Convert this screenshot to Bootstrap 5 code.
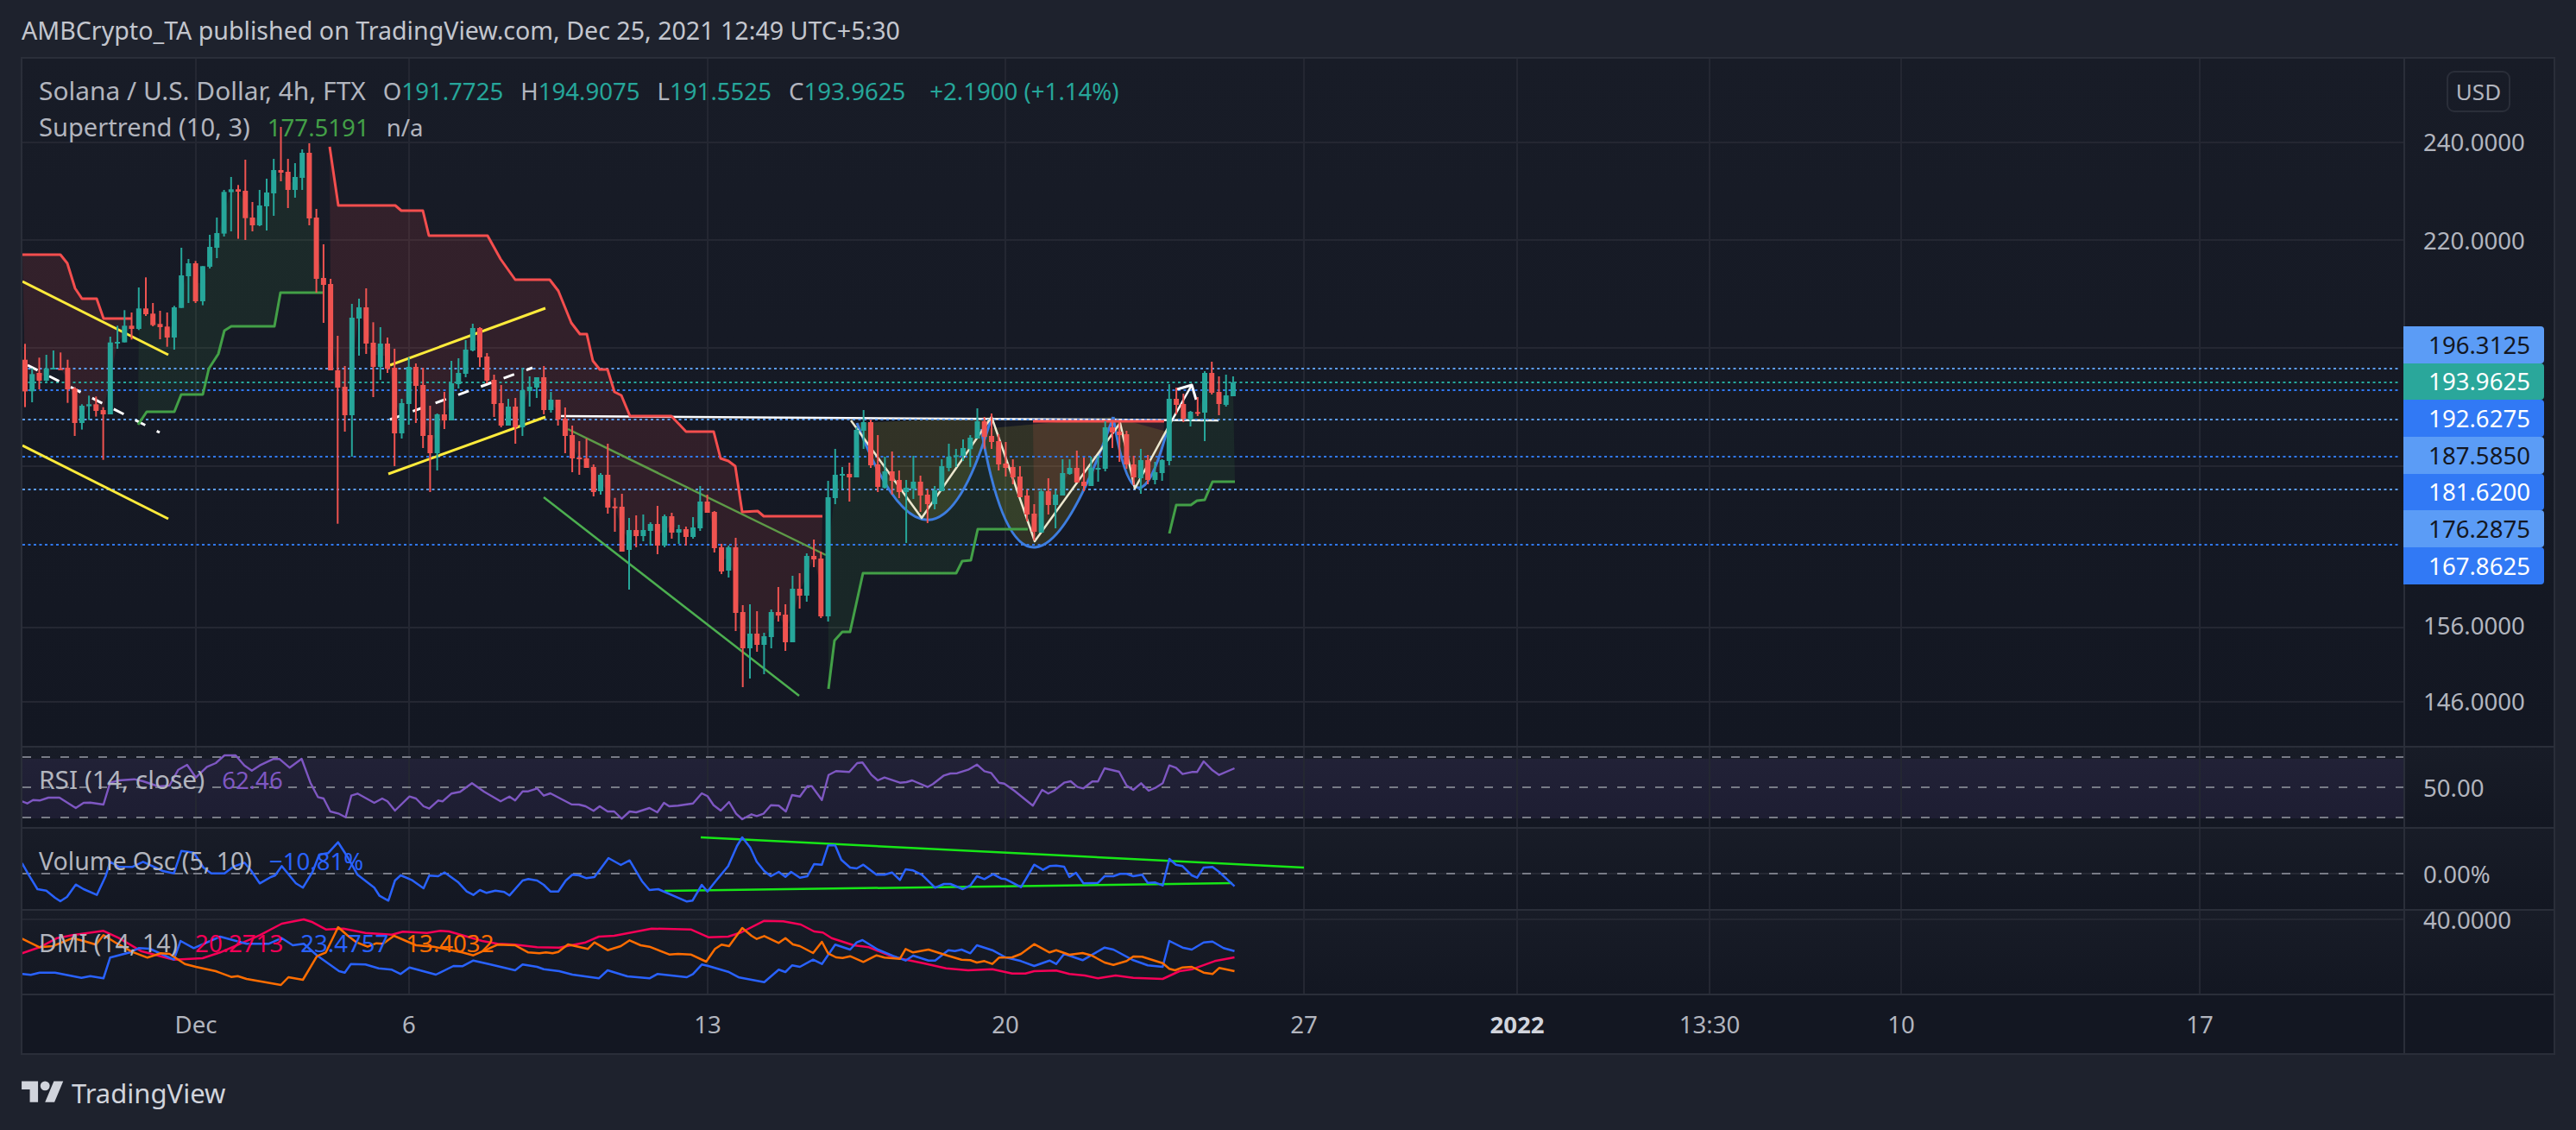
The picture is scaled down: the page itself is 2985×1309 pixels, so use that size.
<!DOCTYPE html>
<html lang="en">
<head>
    <meta charset="UTF-8" />
    <meta name="viewport" content="width=device-width, initial-scale=1" />
    <title>Solana / U.S. Dollar - TradingView</title>
    <link href="https://cdn.jsdelivr.net/npm/bootstrap@5.3.0/dist/css/bootstrap.min.css" rel="stylesheet" />
    <style>
        body {
            background: #1e222d;
            font-family: "Noto Sans", "Liberation Sans", sans-serif;
            font-size: 27.6px;
            color: #b2b5be;
            height: 1309px;
            overflow: hidden;
        }
        .tv-head { height: 66px; padding-left: 25px; font-size: 28.6px; color: #c3c6ce; line-height: 1; padding-top: 4px; }
        .tv-frame { width: 2937px; margin-left: 24px; border: 2px solid #2a2e39; }
        .tv-pane { background: linear-gradient(#181c27, #131722); border-bottom: 2px solid #2a2e39; }
        .tv-time { height: 67px; background: #131722; }
        .tv-plot { width: 2759px; }
        .tv-axis { width: 174px; border-left: 2px solid #2a2e39; }
        .pane-main { height: 798px; }
        .pane-rsi { height: 94px; }
        .pane-vol { height: 95px; }
        .pane-dmi { height: 98px; }
        .tv-legend { top: 16px; left: 19px; line-height: 42px; }
        .tv-row { height: 42px; }
        .tv-label { font-size: 29.9px; }
        .tv-label-mid { font-size: 29.1px; }
        .tv-label-narrow { font-size: 28.5px; }
        .val-teal { color: #26a69a; }
        .val-green { color: #43a047; }
        .val-purple { color: #7e57c2; }
        .val-blue { color: #2962ff; }
        .val-pink { color: #f50057; }
        .val-orange { color: #ff6d00; }
        .tv-gap { margin-left: 20px; }
        .tv-gap-wide { margin-left: 28px; }
        .tv-tick { left: 21px; transform: translateY(-50%); line-height: 1; }
        .tv-date { top: 34px; transform: translate(-50%, -50%); line-height: 1; }
        .tv-date-strong { font-weight: 700; color: #d1d4dc; }
        .tv-usd { top: 14px; left: 48px; width: 74px; height: 48px; border: 2px solid #2a2e39; border-radius: 9px; font-size: 26px; line-height: 1; }
        .tv-tags { top: 310px; left: -2px; width: 163px; }
        .tv-tag { height: 42.7px; padding-right: 16px; border-radius: 0 4px 4px 0; line-height: 1; }
        .tag-light { background: #5b9cf6; color: #131722; }
        .tag-dark { background: #3179f5; color: #fff; }
        .tag-teal { background: #2aa79b; color: #fff; }
        .tv-foot { margin-left: 25px; margin-top: 25px; gap: 9px; color: #d1d4dc; font-size: 31px; line-height: 1; }
    </style>
</head>
<body>

    <div class="tv-head d-flex align-items-center text-nowrap">AMBCrypto_TA published on TradingView.com, Dec 25, 2021 12:49 UTC+5:30</div>

    <div class="tv-frame">
        <div class="tv-pane pane-main d-flex">
            <div class="tv-plot position-relative">
                <svg id="svgMain" class="d-block" width="2759" height="796" viewBox="26 68 2759 796"></svg>
                <div class="tv-legend position-absolute text-nowrap">
                    <div class="tv-row d-flex">
                        <span class="tv-label">Solana / U.S. Dollar, 4h, FTX</span>
                        <span class="tv-gap">O<span class="val-teal">191.7725</span></span>
                        <span class="tv-gap">H<span class="val-teal">194.9075</span></span>
                        <span class="tv-gap">L<span class="val-teal">191.5525</span></span>
                        <span class="tv-gap">C<span class="val-teal">193.9625</span></span>
                        <span class="tv-gap-wide val-teal">+2.1900 (+1.14%)</span>
                    </div>
                    <div class="tv-row d-flex">
                        <span class="tv-label-mid">Supertrend (10, 3)</span>
                        <span class="tv-gap val-green">177.5191</span>
                        <span class="tv-gap">n/a</span>
                    </div>
                </div>
            </div>
            <div class="tv-axis position-relative" id="axisMain">
                <div class="tv-usd position-absolute d-flex align-items-center justify-content-center">USD</div>
                <div class="tv-tags position-absolute d-flex flex-column">
                    <div class="tv-tag tag-light d-flex align-items-center justify-content-end">196.3125</div>
                    <div class="tv-tag tag-teal d-flex align-items-center justify-content-end">193.9625</div>
                    <div class="tv-tag tag-dark d-flex align-items-center justify-content-end">192.6275</div>
                    <div class="tv-tag tag-light d-flex align-items-center justify-content-end">187.5850</div>
                    <div class="tv-tag tag-dark d-flex align-items-center justify-content-end">181.6200</div>
                    <div class="tv-tag tag-light d-flex align-items-center justify-content-end">176.2875</div>
                    <div class="tv-tag tag-dark d-flex align-items-center justify-content-end">167.8625</div>
                </div>
            </div>
        </div>

        <div class="tv-pane pane-rsi d-flex">
            <div class="tv-plot position-relative">
                <svg id="svgRsi" class="d-block" width="2759" height="92" viewBox="26 866 2759 92"></svg>
                <div class="tv-legend position-absolute text-nowrap d-flex">
                    <span class="tv-label">RSI (14, close)</span>
                    <span class="tv-gap val-purple">62.46</span>
                </div>
            </div>
            <div class="tv-axis position-relative" id="axisRsi"></div>
        </div>

        <div class="tv-pane pane-vol d-flex">
            <div class="tv-plot position-relative">
                <svg id="svgVol" class="d-block" width="2759" height="93" viewBox="26 960 2759 93"></svg>
                <div class="tv-legend position-absolute text-nowrap d-flex">
                    <span class="tv-label-narrow">Volume Osc (5, 10)</span>
                    <span class="tv-gap val-blue">−10.81%</span>
                </div>
            </div>
            <div class="tv-axis position-relative" id="axisVol"></div>
        </div>

        <div class="tv-pane pane-dmi d-flex">
            <div class="tv-plot position-relative">
                <svg id="svgDmi" class="d-block" width="2759" height="96" viewBox="26 1055 2759 96"></svg>
                <div class="tv-legend position-absolute text-nowrap d-flex">
                    <span class="tv-label-narrow">DMI (14, 14)</span>
                    <span class="tv-gap val-pink">20.2713</span>
                    <span class="tv-gap val-blue">23.4757</span>
                    <span class="tv-gap val-orange">13.4032</span>
                </div>
            </div>
            <div class="tv-axis position-relative" id="axisDmi"></div>
        </div>

        <div class="tv-time d-flex">
            <div class="tv-plot position-relative" id="timeAxis"></div>
            <div class="tv-axis"></div>
        </div>
    </div>

    <div class="tv-foot d-flex align-items-center">
        <svg width="49" height="38" viewBox="0 0 36 28" fill="#d1d4dc"><path d="M14 22H7V11H0V4h14v18zM28 22h-8l7.5-18h8L28 22z"/><circle cx="20" cy="8" r="4"/></svg>
        <span>TradingView</span>
    </div>

    <script src="https://cdn.jsdelivr.net/npm/bootstrap@5.3.0/dist/js/bootstrap.bundle.min.js"></script>

    <script>
        // candles: type, high, body top, body bottom, low, read off the screenshot per block
        const candleBlocks = [
            [150, `d745,800,910,965 u830,850,910,948 d793,846,873,903 u783,830,873,875 u768,828,833,833 d775,830,835,835 d800,828,903,950 d895,900,1020,1065 u955,960,1020,1043 u925,955,962,1010 d928,955,978,998 d965,975,990,1148 u720,740,990,990 u682,738,744,762 u628,682,740,740 d636,682,693,730 u549,622,693,697 d514,622,642,648 d603,640,680,684 d630,676,687,729 d636,685,723,755 u613,618,723,765 u411,507,620,620 u450,465,510,603 d457,465,597,603 u475,475,597,611 u366,408,477,483 u306,360,411,447 u210,217,362,372 u165,208,218,354 d193,208,216,380 d105,213,308,384 d252,306,333,354 u210,264,333,336 u171,219,267,351 u102,141,222,300 d-9,141,150,180 d102,147,210,273 u117,165,210,237 u69,81,168,210 d48,81,309,333 d276,306,519,567 d399,516,540,672 d519,537,837,837 d717,837,897,1370 d822,894,993,1050 u606,654,993,1137 u588,618,657,786`],
            [300, `d102,168,294,330 d220,291,375,480 u237,294,375,420 d273,294,382,396 d312,378,606,720 u486,501,606,624 u342,375,504,576 d363,375,441,570 d378,438,615,657 d510,612,675,810 u537,540,675,735 d462,540,561,591 u354,432,561,561 u345,396,435,450 u282,315,399,411 u225,240,318,321 d237,240,342,375 d327,339,423,432 d402,420,504,549 d438,501,579,585 u486,513,579,579 d483,513,585,642 u378,456,585,615 u408,444,459,513 u411,411,447,483 d372,411,525,540 u462,489,525,534 d489,489,558,579 d516,555,615,675 d579,612,693,741 d633,690,695,750 d624,693,726,726 d714,723,810,825 u744,750,807,819 d642,750,864,885`],
            [460, `d350,380,384,468 d336,381,537,537 u420,462,531,669 d411,462,483,522 u408,462,483,501 u435,441,465,516 d378,441,516,546 u408,414,516,522 d402,414,471,492 u444,459,471,510 d450,459,486,516 u417,453,486,492 u309,363,456,465 d339,363,402,402 d396,399,525,540 d510,522,606,615 u516,522,603,627 d489,522,750,813 d723,747,873,1008 u720,822,873,978 d744,822,861,885 u819,831,861,963 u738,747,834,873 d660,747,759,780 d720,756,852,882 u621,666,852,852 d612,666,690,735 u543,552,690,711 d495,552,564,591 d537,561,762,768 u291,348,762,780 u180,270,351,372 u243,267,273,318`],
            [420, `d348,387,399,483 u225,234,399,399 u165,207,237,300 d198,207,357,366 d252,354,432,450 u327,378,435,438 d309,378,411,459 d375,408,450,471 u408,435,450,627 u324,414,438,474 d393,414,462,519 d441,459,492,558 u429,444,492,510 u336,360,447,447 u282,327,366,378 u300,322,328,363 u267,297,324,342 u252,261,301,363 u159,204,264,264 d189,204,258,300 d177,255,276,300 d249,273,354,375 d276,351,366,396 d336,363,399,423 d360,396,468,468 d441,462,528,552 d492,525,588,618 u438,447,591,591 d402,447,495,528 u444,459,495,576 u336,384,462,462 u336,366,387,390 d306,366,417,417 d330,414,429,447 u327,366,429,429 u324,366,369,414 u204,225,369,378 d198,225,243,297 d207,240,252,345 d237,249,354,369 d324,354,399,426 u300,339,402,456 d321,339,408,423 u345,381,408,423 u336,339,384,411 u75,126,342,357 d87,126,147,180 d108,144,195,207 u168,171,198,222 d120,172,174,186 u30,36,174,273 d-3,36,105,111 d48,102,144,183 u42,114,147,153 u48,69,117,117`]
        ];
        const candles = [];
        candleBlocks.forEach(([base, txt]) => {
            txt.trim().split(/\s+/).forEach(c => {
                const v = c.slice(1).split(',').map(n => base + Number(n) / 3);
                const i = candles.length;
                candles.push({ up: c[0] === 'u', x: 29 + 8.235 * i, hi: v[0], top: v[1], bot: v[2], lo: v[3] });
            });
        });

        const TEAL = '#26a69a', RED = '#ef5350', ST_RED = '#f44e4e', ST_GREEN = '#43a047';
        const vGrid = [227, 474, 820, 1165, 1511, 1758, 1981, 2203, 2549];
        const GRID = '#242732';

        const ptsAttr = pts => pts.map(p => p[0].toFixed(1) + ',' + p[1].toFixed(1)).join(' ');
        const poly = (pts, color, w, extra = '') =>
            `<polyline points="${ptsAttr(pts)}" fill="none" stroke="${color}" stroke-width="${w}" stroke-linejoin="round" ${extra}/>`;
        const hLine = (y, color, w, extra = '') =>
            `<line x1="26" x2="2785" y1="${y}" y2="${y}" stroke="${color}" stroke-width="${w}" ${extra}/>`;
        const vLines = (top, bot) => vGrid.map(x =>
            `<line x1="${x}" x2="${x}" y1="${top}" y2="${bot}" stroke="${GRID}" stroke-width="2"/>`).join('');

        // supertrend, segment by segment
        const trend = [
            { color: ST_RED, fill: 'rgba(255,82,82,.12)', from: 0, to: 15, w: 3,
              pts: [[26,295],[70,295],[78,305],[87,334],[95,346],[112,346],[120,369],[153,369]] },
            { color: ST_RED, fill: 'rgba(255,82,82,.12)', from: 43, to: 112, w: 3,
              pts: [[382,170],[392,238],[458,238],[465,244],[490,244],[497,273],[565,273],[580,300],[597,324],[637,324],[647,337],[662,374],[672,387],[680,387],[687,418],[695,428],[704,428],[712,454],[720,458],[730,482],[778,482],[795,500],[827,500],[835,531],[844,534],[852,540],[860,593],[878,592],[885,598],[953,598]] },
            { color: ST_RED, fill: 'rgba(255,82,82,.12)', from: 142, to: 160, w: 3,
              pts: [[1197,488],[1349,488]] },
            { color: ST_GREEN, fill: 'rgba(76,175,80,.1)', from: 16, to: 42, w: 3,
              pts: [[160,492],[170,477],[202,477],[210,457],[235,457],[242,427],[253,410],[260,383],[268,378],[318,378],[325,339],[375,339]] },
            { color: ST_GREEN, fill: 'rgba(76,175,80,.1)', from: 113, to: 141, w: 3,
              pts: [[960,798],[967,742],[976,732],[985,732],[1000,664],[1108,664],[1115,650],[1125,649],[1133,613],[1191,613]] },
            { color: ST_GREEN, fill: 'rgba(76,175,80,.1)', from: 161, to: 170, w: 3,
              pts: [[1355,618],[1363,585],[1380,585],[1387,580],[1396,579],[1405,558],[1431,558]] }
        ];

        const cups = ['M993 490Q1081 718 1149 483', 'M1137 497Q1186 778 1290 483', 'M1290 483Q1315 638 1352 500'];
        const dots = [[427,'#5b9cf6'],[443,'#26a69a'],[452,'#3179f5'],[486,'#5b9cf6'],[529,'#3179f5'],[567,'#5b9cf6'],[631,'#3179f5']];

        let main = '';
        [165, 278, 403, 540, 727, 813].forEach(y => main += hLine(y, GRID, 2));
        main += vLines(68, 864);

        trend.forEach(t => {
            const back = [];
            for (let i = t.to; i >= t.from; i--) {
                back.push([candles[i].x, (candles[i].top + candles[i].bot) / 2]);
            }
            main += `<polygon points="${ptsAttr(t.pts.concat(back))}" fill="${t.fill}"/>`;
        });
        cups.forEach(d => main += `<path d="${d}Z" fill="rgba(255,235,59,.12)"/>`);

        // drawings sit under the candles and the supertrend line
        const YELLOW = '#ffeb3b', CHANNEL = '#4caf50', CREAM = '#ece8cf';
        main += poly([[650,482],[1412,487]], '#fff', 2.5);
        dots.forEach(([y, c]) => main += `<line x1="26" x2="2782" y1="${y}" y2="${y}" stroke="${c}" stroke-width="2" stroke-dasharray="3 3.5"/>`);
        main += poly([[26,326],[195,411]], YELLOW, 3) + poly([[26,516],[195,601]], YELLOW, 3);
        main += poly([[452,423],[632,357]], YELLOW, 3) + poly([[450,549],[632,483]], YELLOW, 3);
        main += poly([[32,423],[185,501]], '#fff', 3, 'stroke-dasharray="13 15"');
        main += poly([[452,486],[617,426]], '#fff', 3, 'stroke-dasharray="13 15"');
        main += poly([[658,497],[957,643]], '#5d9a47', 2.5) + poly([[630,576],[926,806]], CHANNEL, 2.5);
        cups.forEach(d => main += `<path d="${d}" fill="none" stroke="#3d7ddf" stroke-width="3"/>`);
        main += poly([[986,487],[1068,600],[1149,483],[1199,627],[1298,490],[1315,566],[1358,487]], CREAM, 2.5);
        main += poly([[1358,487],[1381,446]], '#fff', 2.5) + poly([[1364,451],[1381,446],[1386,463]], '#fff', 3);
        trend.forEach(t => main += poly(t.pts, t.color, t.w));

        candles.forEach(c => {
            const col = c.up ? TEAL : RED;
            const h = Math.max(c.bot - c.top, 2);
            main += `<rect x="${(c.x - 1).toFixed(1)}" y="${c.hi.toFixed(1)}" width="2" height="${(c.lo - c.hi).toFixed(1)}" fill="${col}"/>`;
            main += `<rect x="${(c.x - 3).toFixed(1)}" y="${c.top.toFixed(1)}" width="6" height="${h.toFixed(1)}" fill="${col}"/>`;
        });
        document.getElementById('svgMain').innerHTML = main;

        // indicator lines, read off two crops
        const crop = (x0, sx, s) => {
            const n = s.trim().split(/[\s,]+/).map(Number), out = [];
            for (let i = 0; i < n.length; i += 2) out.push([x0 + n[i] / sx, 860 + n[i + 1] / 3]);
            return out;
        };
        const series = (a, b) => crop(0, 1.96, a).filter(p => p[0] < 800).concat(crop(780, 1.96, b).filter(p => p[0] >= 800));

        const rsi = series(
            `50,205 62,212 75,200 90,202 110,192 135,192 172,228 190,210 205,209 235,216 250,140 270,132 305,128 325,135 360,153 385,150 405,95 425,78 445,122 470,85 490,72 510,45 535,45 555,80 572,98 590,80 620,58 635,58 658,88 685,57 705,140 722,190 735,195 750,240 770,248 785,260 798,185 812,178 850,210 868,195 880,205 897,237 930,188 945,195 962,222 975,230 995,202 1005,205 1025,178 1045,172 1072,142 1100,172 1137,205 1157,188 1170,202 1187,170 1200,170 1220,160 1235,185 1250,177 1298,215 1315,216 1330,222 1348,238 1362,222 1380,240 1395,240 1412,265 1430,240 1445,243 1475,228 1493,243 1508,210 1520,222 1540,220 1568,218`,
            `45,212 65,177 78,187 92,218 108,237 127,207 143,248 157,267 178,250 190,256 205,248 222,218 240,220 256,240 270,183 288,188 305,152 315,152 338,200 353,113 370,100 400,103 418,72 430,70 450,112 465,132 480,122 515,140 530,138 543,132 578,155 590,145 615,115 630,108 645,107 670,95 690,77 707,100 722,106 740,140 752,143 775,168 817,220 838,165 852,178 865,168 888,140 903,135 918,155 932,160 952,136 965,136 980,90 1013,102 1030,150 1045,165 1063,142 1080,168 1095,158 1112,142 1127,80 1142,88 1157,110 1178,103 1190,103 1205,66 1225,97 1240,113 1275,90`);
        const vol = series(
            `50,420 65,460 85,510 105,515 125,540 137,552 152,537 172,494 190,510 220,530 240,465 250,415 270,432 300,433 325,415 370,447 395,455 412,377 440,383 462,435 480,455 510,455 530,432 555,418 570,445 590,490 615,468 625,462 640,430 672,490 688,505 710,450 725,390 745,385 768,347 790,400 812,460 850,505 862,533 882,550 897,480 910,462 935,478 962,507 975,463 995,465 1010,452 1040,485 1060,518 1075,530 1090,513 1105,523 1125,515 1145,520 1157,532 1187,480 1200,475 1220,480 1235,495 1250,518 1268,518 1285,480 1300,460 1315,462 1332,472 1350,468 1382,402 1410,426 1430,410 1458,482 1475,513 1495,510 1560,553`,
            `44,550 65,495 78,518 95,485 125,430 145,360 157,330 175,365 190,415 207,447 222,465 240,450 255,467 268,450 288,470 305,465 320,423 338,425 352,358 368,358 382,408 402,435 417,438 432,425 462,460 480,460 497,452 515,478 528,441 545,445 565,460 595,505 615,492 630,492 658,510 675,497 690,465 707,475 727,458 745,473 755,475 790,503 805,465 820,425 840,443 855,430 870,428 888,432 900,468 915,453 932,490 965,488 980,465 1000,465 1015,457 1030,457 1045,465 1065,460 1078,488 1095,487 1112,497 1127,405 1142,425 1157,430 1178,462 1190,470 1205,435 1225,433 1240,450 1275,500`);
        const dmiPlus = series(
            `50,733 90,712 130,680 165,670 235,655 270,680 320,725 395,755 460,750 500,730 590,670 640,630 690,615 710,625 740,650 780,647 830,662 890,668 915,658 970,662 1000,655 1020,657 1095,690 1130,700 1170,703 1220,712 1270,713 1330,695 1360,675 1395,672 1480,647 1568,649`,
            `40,650 80,677 125,675 155,660 207,620 250,622 290,633 320,657 340,661 360,680 410,705 445,712 490,740 520,752 570,768 620,785 670,792 725,788 770,803 800,803 820,795 870,793 900,805 935,810 965,820 1005,810 1045,818 1112,822 1150,795 1180,788 1230,760 1275,747`);
        const dmiMinus = series(
            `50,805 70,808 90,800 125,800 185,818 205,812 235,820 250,748 295,730 315,715 340,717 395,755 410,690 440,715 500,675 560,700 610,700 640,680 665,705 690,700 720,740 770,795 783,800 797,770 830,772 860,785 890,790 910,805 930,782 990,807 1030,777 1050,778 1075,758 1110,770 1170,792 1187,772 1220,780 1235,788 1270,795 1300,807 1360,820 1380,792 1425,813 1475,820 1493,805 1560,816`,
            `45,805 65,772 80,777 125,797 150,817 207,833 240,790 255,798 270,775 288,780 318,755 338,770 368,703 402,720 417,695 430,687 465,720 500,742 528,758 545,741 580,758 595,758 625,722 640,725 655,720 675,733 690,705 725,722 755,747 790,760 820,777 855,758 870,770 888,735 930,757 980,713 1000,720 1045,757 1078,775 1112,780 1127,690 1157,713 1178,720 1205,695 1225,692 1250,715 1275,725`);
        const dmiAdx = series(
            `50,682 90,712 120,708 165,680 190,690 218,703 235,670 265,698 300,728 335,748 365,733 385,735 420,770 445,780 490,795 525,815 540,812 560,822 638,843 655,816 688,825 720,743 740,730 768,642 790,672 810,695 835,710 855,698 870,700 895,672 945,705 985,710 1050,730 1075,740 1130,703 1170,705 1200,730 1225,733 1240,730 1255,733 1268,728 1290,702 1335,718 1350,695 1380,722 1410,708 1430,688 1455,705 1475,710 1520,737 1540,735 1568,742`,
            `40,737 75,762 95,718 110,703 127,708 157,645 178,672 190,683 207,673 240,697 255,680 272,702 288,708 318,732 338,693 352,733 370,747 385,749 402,743 432,763 462,740 480,748 515,752 528,718 545,730 580,720 625,742 655,755 675,757 690,765 707,760 725,770 740,748 770,747 790,735 820,701 855,730 870,722 900,738 930,732 950,740 980,765 1000,773 1030,760 1045,744 1065,745 1112,767 1127,787 1140,792 1157,782 1178,780 1205,800 1225,805 1240,784 1275,795`);

        const DASH = 'stroke-dasharray="10 12"';
        document.getElementById('svgRsi').innerHTML =
            `<rect x="26" y="879" width="2759" height="69" fill="rgba(126,87,194,.1)"/>` + vLines(866, 958) +
            hLine(877, '#787b86', 2, DASH) + hLine(912, '#787b86', 2, DASH) + hLine(947, '#787b86', 2, DASH) +
            poly(rsi, '#7e57c2', 2.4);
        document.getElementById('svgVol').innerHTML =
            vLines(960, 1053) + hLine(1012, GRID, 2) + hLine(1012, '#787b86', 2, DASH) +
            poly([[812,970],[1511,1005]], '#17e617', 2.5) + poly([[770,1032],[1428,1023]], '#17e617', 2.5) +
            poly(vol, '#2962ff', 2.5);
        document.getElementById('svgDmi').innerHTML =
            vLines(1055, 1151) + hLine(1065, GRID, 2) +
            poly(dmiPlus, '#f50057', 2.5) + poly(dmiMinus, '#2962ff', 2.5) + poly(dmiAdx, '#ff6d00', 2.5);

        // axis labels
        const ticks = [
            ['axisMain', 68, [['240.0000', 165], ['220.0000', 279], ['156.0000', 725], ['146.0000', 813]]],
            ['axisRsi', 866, [['50.00', 913]]],
            ['axisVol', 960, [['0.00%', 1013]]],
            ['axisDmi', 1055, [['40.0000', 1066]]]
        ];
        ticks.forEach(([id, top, list]) => {
            const el = document.getElementById(id);
            list.forEach(([txt, y]) => {
                el.insertAdjacentHTML('beforeend',
                    `<div class="tv-tick position-absolute" style="top:${y - top}px">${txt}</div>`);
            });
        });

        const dates = [['Dec', 227], ['6', 474], ['13', 820], ['20', 1165], ['27', 1511], ['2022', 1758, true], ['13:30', 1981], ['10', 2203], ['17', 2549]];
        const timeAxis = document.getElementById('timeAxis');
        dates.forEach(([txt, x, strong]) => {
            timeAxis.insertAdjacentHTML('beforeend',
                `<div class="tv-date position-absolute ${strong ? 'tv-date-strong' : ''}" style="left:${x - 26}px">${txt}</div>`);
        });
    </script>

</body>
</html>
